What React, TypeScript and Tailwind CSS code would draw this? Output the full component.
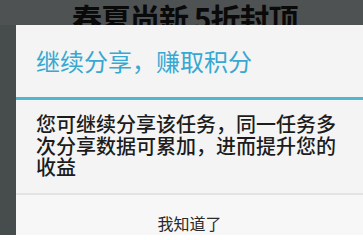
export default function App() {
  const font = { fontFamily: '"Noto Sans CJK SC", "Noto Sans", sans-serif' };
  return (
    <div
      className="w-[363px] h-[235px] overflow-hidden bg-[#474c4c] flex flex-col"
      style={font}
    >
      <div className="h-[25px] shrink-0 overflow-hidden bg-[#4f5252]">
        <div className="pt-[2px] pl-[72px] text-[30px] leading-[30px] font-bold text-[#0a0a0a] whitespace-nowrap tracking-[-1px]">
          春夏尚新 5折封顶
        </div>
      </div>
      <div className="ml-[16px] flex-1 bg-[#f4f4f4] flex flex-col">
        <div className="pl-[20px] pt-[24px] pb-[24px] text-[24px] leading-[24px] text-[#36a8d2] whitespace-nowrap">
          继续分享，赚取积分
        </div>
        <div className="h-[3px] bg-[#4db6d3]" />
        <div className="pl-[20px] pt-[13px] pb-[15px] text-[20px] leading-[21.5px] font-medium text-[#1c1c1c]">
          <div className="w-[304px]">
            您可继续分享该任务，同一任务多次分享数据可累加，进而提升您的收益
          </div>
        </div>
        <div className="h-[2px] bg-[#e3e3e3]" />
        <div className="flex-1 bg-[#f7f7f7] flex justify-center pt-[20px] text-[16px] leading-[16px] text-[#2a2a2a]">
          我知道了
        </div>
      </div>
    </div>
  );
}
